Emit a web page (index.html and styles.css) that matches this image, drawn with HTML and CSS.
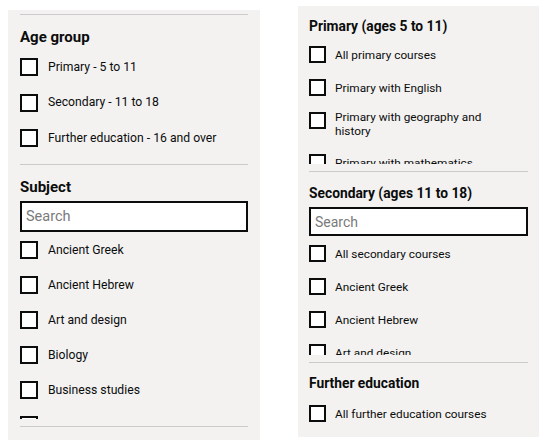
FILE: index.html
```html
<!DOCTYPE html>
<html lang="en">
<head>
<meta charset="utf-8">
<title>Course filters</title>
<link rel="stylesheet" href="styles.css">
</head>
<body>
<div class="page">
  <form class="panel panel-left">
    <section class="section section-plain">
      <h2 class="heading">Age group</h2>
      <div class="checks">
        <label class="check"><input type="checkbox" class="check-input"><span class="check-label">Primary - 5 to 11</span></label>
        <label class="check"><input type="checkbox" class="check-input"><span class="check-label">Secondary - 11 to 18</span></label>
        <label class="check"><input type="checkbox" class="check-input"><span class="check-label">Further education - 16 and over</span></label>
      </div>
    </section>
    <section class="section section-search">
      <h2 class="heading heading-search">Subject</h2>
      <input type="text" class="search" placeholder="Search">
      <div class="checks scroll">
        <label class="check"><input type="checkbox" class="check-input"><span class="check-label">Ancient Greek</span></label>
        <label class="check"><input type="checkbox" class="check-input"><span class="check-label">Ancient Hebrew</span></label>
        <label class="check"><input type="checkbox" class="check-input"><span class="check-label">Art and design</span></label>
        <label class="check"><input type="checkbox" class="check-input"><span class="check-label">Biology</span></label>
        <label class="check"><input type="checkbox" class="check-input"><span class="check-label">Business studies</span></label>
        <label class="check"><input type="checkbox" class="check-input"><span class="check-label">Chemistry</span></label>
        <label class="check"><input type="checkbox" class="check-input"><span class="check-label">Citizenship</span></label>
        <label class="check"><input type="checkbox" class="check-input"><span class="check-label">Classics</span></label>
      </div>
    </section>
  </form>

  <form class="panel panel-right">
    <section class="section section-primary">
      <h2 class="heading">Primary (ages 5 to 11)</h2>
      <div class="checks scroll scroll-primary">
        <label class="check"><input type="checkbox" class="check-input"><span class="check-label">All primary courses</span></label>
        <label class="check"><input type="checkbox" class="check-input"><span class="check-label">Primary with English</span></label>
        <label class="check check-multi"><input type="checkbox" class="check-input"><span class="check-label">Primary with geography and history</span></label>
        <label class="check"><input type="checkbox" class="check-input"><span class="check-label">Primary with mathematics</span></label>
        <label class="check"><input type="checkbox" class="check-input"><span class="check-label">Primary with modern languages</span></label>
        <label class="check"><input type="checkbox" class="check-input"><span class="check-label">Primary with physical education</span></label>
      </div>
    </section>
    <section class="section section-secondary">
      <h2 class="heading heading-search">Secondary (ages 11 to 18)</h2>
      <input type="text" class="search" placeholder="Search">
      <div class="checks scroll scroll-secondary">
        <label class="check"><input type="checkbox" class="check-input"><span class="check-label">All secondary courses</span></label>
        <label class="check"><input type="checkbox" class="check-input"><span class="check-label">Ancient Greek</span></label>
        <label class="check"><input type="checkbox" class="check-input"><span class="check-label">Ancient Hebrew</span></label>
        <label class="check"><input type="checkbox" class="check-input"><span class="check-label">Art and design</span></label>
        <label class="check"><input type="checkbox" class="check-input"><span class="check-label">Biology</span></label>
        <label class="check"><input type="checkbox" class="check-input"><span class="check-label">Business studies</span></label>
      </div>
    </section>
    <section class="section section-further">
      <h2 class="heading">Further education</h2>
      <div class="checks">
        <label class="check"><input type="checkbox" class="check-input"><span class="check-label">All further education courses</span></label>
      </div>
    </section>
  </form>
</div>
</body>
</html>
```

FILE: styles.css
```css
* {
  box-sizing: border-box;
}

html, body {
  margin: 0;
  background: #ffffff;
}

body {
  font-family: Roboto, "Liberation Sans", Arial, sans-serif;
  color: #0b0c0c;
}

.page {
  display: flex;
  align-items: flex-start;
  gap: 38px;
  padding-left: 8px;
}

.panel {
  margin: 0;
  background: #f3f2f1;
  display: flex;
  flex-direction: column;
}

.heading {
  margin: 0;
  font-weight: 700;
  line-height: 20px;
}

.checks {
  display: flex;
  flex-direction: column;
}

.check {
  display: flex;
  flex: none;
  align-items: center;
  cursor: pointer;
}

.check-input {
  appearance: none;
  -webkit-appearance: none;
  margin: 0;
  flex: none;
  background: #ffffff;
  border: 2px solid #0b0c0c;
  border-radius: 0;
}

.check-multi {
  align-items: flex-start;
}

.check-multi .check-label {
  margin-top: -2px;
}

.search {
  display: block;
  flex: none;
  width: 100%;
  margin: 0;
  border: 2px solid #0b0c0c;
  border-radius: 0;
  background: #ffffff;
  padding: 0 4px;
  font-family: Roboto, "Liberation Sans", Arial, sans-serif;
  color: #0b0c0c;
  outline: none;
}

.search::placeholder {
  color: #7a7a7a;
  opacity: 1;
}

.scroll {
  overflow-y: auto;
  scrollbar-width: none;
}

/* Left panel */
.panel-left {
  width: 252px;
  height: 430px;
  margin-top: 10px;
  padding: 4px 12px 14px;
}

.panel-left .section {
  border-top: 1px solid #cbcbcb;
  padding-top: 12px;
}

.panel-left .section-plain {
  padding-bottom: 17px;
}

.panel-left .section-search {
  padding-bottom: 7px;
  border-bottom: 1px solid #cbcbcb;
}

.panel-left .heading {
  font-size: 15px;
  margin-bottom: 11px;
}

.panel-left .heading-search {
  margin-bottom: 4px;
}

.panel-left .checks {
  gap: 17.5px;
}

.panel-left .check {
  gap: 10px;
  min-height: 18px;
}

.panel-left .check-input {
  width: 18px;
  height: 18px;
}

.panel-left .check-label {
  font-size: 12.2px;
  line-height: 15px;
}

.panel-left .search {
  height: 31px;
  font-size: 14.5px;
}

.panel-left .scroll {
  margin-top: 9px;
  height: 178px;
  gap: 17px;
}

/* Right panel */
.panel-right {
  width: 241px;
  height: 431px;
  margin-top: 6px;
  padding: 10px 11px 15px;
}

.panel-right .section + .section {
  border-top: 1px solid #cbcbcb;
}

.panel-right .heading {
  font-size: 13.8px;
  margin-bottom: 10px;
}

.panel-right .heading-search {
  margin-bottom: 4px;
}

.panel-right .checks {
  gap: 16px;
}

.panel-right .check {
  gap: 9px;
  min-height: 17px;
}

.panel-right .check-input {
  width: 17px;
  height: 17px;
}

.panel-right .check-label {
  font-size: 11.8px;
  line-height: 14px;
  max-width: 172px;
}

.panel-right .search {
  height: 29px;
  font-size: 14px;
}

.section-primary {
  padding-bottom: 7px;
}

.scroll-primary {
  height: 118px;
}

.section-secondary {
  padding-top: 11px;
  padding-bottom: 7px;
}

.scroll-secondary {
  margin-top: 9px;
  height: 110px;
}

.section-further {
  padding-top: 10px;
}

.section-further .heading {
  margin-bottom: 12px;
}
```
